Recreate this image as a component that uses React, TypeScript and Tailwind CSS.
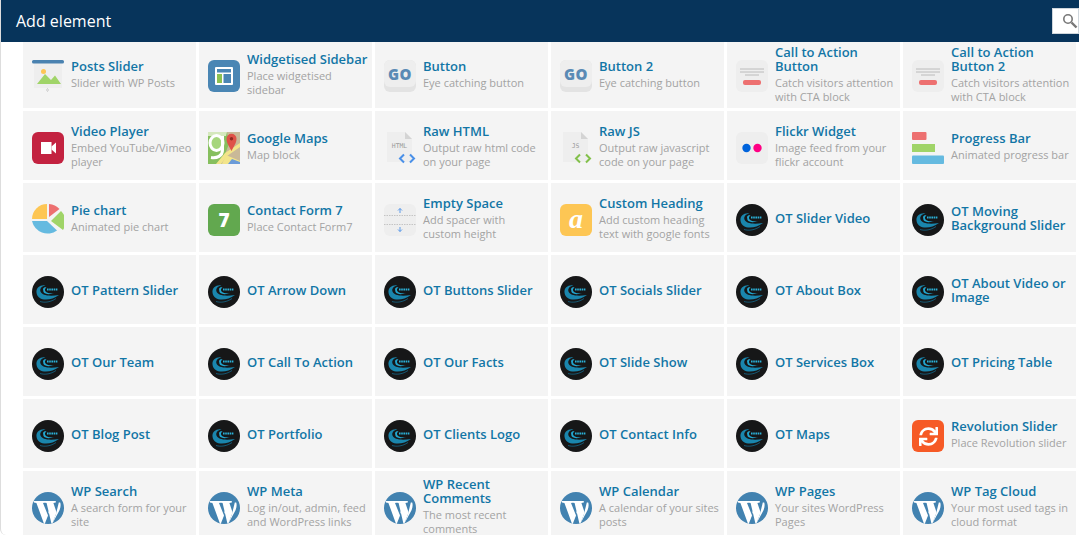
import { FaSync } from 'react-icons/fa'

type Item = { title: string; desc?: string; icon: string }

const items: Item[] = [
  { title: 'Posts Slider', desc: 'Slider with WP Posts', icon: 'slider' },
  { title: 'Widgetised Sidebar', desc: 'Place widgetised sidebar', icon: 'sidebar' },
  { title: 'Button', desc: 'Eye catching button', icon: 'go' },
  { title: 'Button 2', desc: 'Eye catching button', icon: 'go' },
  { title: 'Call to Action Button', desc: 'Catch visitors attention with CTA block', icon: 'cta' },
  { title: 'Call to Action Button 2', desc: 'Catch visitors attention with CTA block', icon: 'cta' },
  { title: 'Video Player', desc: 'Embed YouTube/Vimeo player', icon: 'video' },
  { title: 'Google Maps', desc: 'Map block', icon: 'maps' },
  { title: 'Raw HTML', desc: 'Output raw html code on your page', icon: 'html' },
  { title: 'Raw JS', desc: 'Output raw javascript code on your page', icon: 'js' },
  { title: 'Flickr Widget', desc: 'Image feed from your flickr account', icon: 'flickr' },
  { title: 'Progress Bar', desc: 'Animated progress bar', icon: 'progress' },
  { title: 'Pie chart', desc: 'Animated pie chart', icon: 'pie' },
  { title: 'Contact Form 7', desc: 'Place Contact Form7', icon: 'seven' },
  { title: 'Empty Space', desc: 'Add spacer with custom height', icon: 'space' },
  { title: 'Custom Heading', desc: 'Add custom heading text with google fonts', icon: 'heading' },
  { title: 'OT Slider Video', icon: 'ot' },
  { title: 'OT Moving Background Slider', icon: 'ot' },
  { title: 'OT Pattern Slider', icon: 'ot' },
  { title: 'OT Arrow Down', icon: 'ot' },
  { title: 'OT Buttons Slider', icon: 'ot' },
  { title: 'OT Socials Slider', icon: 'ot' },
  { title: 'OT About Box', icon: 'ot' },
  { title: 'OT About Video or Image', icon: 'ot' },
  { title: 'OT Our Team', icon: 'ot' },
  { title: 'OT Call To Action', icon: 'ot' },
  { title: 'OT Our Facts', icon: 'ot' },
  { title: 'OT Slide Show', icon: 'ot' },
  { title: 'OT Services Box', icon: 'ot' },
  { title: 'OT Pricing Table', icon: 'ot' },
  { title: 'OT Blog Post', icon: 'ot' },
  { title: 'OT Portfolio', icon: 'ot' },
  { title: 'OT Clients Logo', icon: 'ot' },
  { title: 'OT Contact Info', icon: 'ot' },
  { title: 'OT Maps', icon: 'ot' },
  { title: 'Revolution Slider', desc: 'Place Revolution slider', icon: 'rev' },
  { title: 'WP Search', desc: 'A search form for your site', icon: 'wp' },
  { title: 'WP Meta', desc: 'Log in/out, admin, feed and WordPress links', icon: 'wp' },
  { title: 'WP Recent Comments', desc: 'The most recent comments', icon: 'wp' },
  { title: 'WP Calendar', desc: 'A calendar of your sites posts', icon: 'wp' },
  { title: 'WP Pages', desc: 'Your sites WordPress Pages', icon: 'wp' },
  { title: 'WP Tag Cloud', desc: 'Your most used tags in cloud format', icon: 'wp' },
]

function Icon({ name }: { name: string }) {
  switch (name) {
    case 'slider':
      return (
        <svg viewBox="0 0 32 32" className="h-8 w-8">
          <rect x="2" y="2" width="28" height="26" fill="#eeeeee" />
          <rect x="0" y="0" width="32" height="3.5" rx="1.5" fill="#4a82b0" />
          <circle cx="11.5" cy="11.5" r="2.5" fill="#fdc654" />
          <path d="M5 24 L13 14 L19 20 L23 15.5 L29 24 Z" fill="#a0d468" />
          <path d="M15.5 28.5 L16.5 30 L15.5 31.5 L14.5 30 Z" fill="none" stroke="#aaaaaa" strokeWidth="0.5" />
        </svg>
      )
    case 'sidebar':
      return (
        <svg viewBox="0 0 32 32" className="h-8 w-8">
          <rect width="32" height="32" rx="6" fill="#4a86b4" />
          <rect x="7" y="7" width="18" height="18" rx="1" fill="#ffffff" />
          <rect x="9" y="9" width="14" height="3.5" fill="#4a86b4" />
          <rect x="9" y="14" width="5" height="9" fill="#8cc152" />
          <rect x="15.5" y="14" width="7.5" height="9" fill="#4a86b4" />
        </svg>
      )
    case 'go':
      return (
        <div className="relative h-8 w-8 rounded-md bg-[#e3e3e3]">
          <div className="flex h-[27px] w-8 items-center justify-center rounded-md bg-[#eeeeee] pt-[1px] font-['Open_Sans',sans-serif] text-[15px] leading-none font-extrabold tracking-[0.5px] text-[#5a8ab5]">
            GO
          </div>
        </div>
      )
    case 'cta':
      return (
        <svg viewBox="0 0 32 32" className="h-8 w-8">
          <rect width="32" height="32" rx="6" fill="#eeeeee" />
          <path d="M4 9 H28 M4 12 H28 M9 15 H23" stroke="#b4b4b4" strokeWidth="0.9" />
          <rect x="7" y="20" width="18" height="5" rx="2" fill="#ed7070" />
        </svg>
      )
    case 'video':
      return (
        <svg viewBox="0 0 32 32" className="h-8 w-8">
          <rect width="32" height="32" rx="6" fill="#c32240" />
          <rect x="9" y="10" width="10.5" height="12" fill="#ffffff" />
          <path d="M19.5 14.5 L24 10.5 V21.5 L19.5 17.5 Z" fill="#ffffff" />
        </svg>
      )
    case 'maps':
      return (
        <svg viewBox="0 0 32 32" className="h-8 w-8">
          <rect width="32" height="32" fill="#c9b998" />
          <path d="M0 0 H19 L21 12 L13 32 H0 Z" fill="#86bf5e" />
          <path d="M0 0 H19 L18 4 H0 Z" fill="#d5e8bd" />
          <path d="M8 32 L17 21 L32 11 V15 L19 24 L13 32 Z" fill="#f3e58a" />
          <path d="M18 23 L32 29 V32 H14 Z" fill="#f3e58a" />
          <path d="M20 32 L24 27 L32 30 V32 Z" fill="#6b9bd8" />
          <ellipse cx="8.5" cy="11" rx="6.5" ry="7.5" fill="#a6d67c" stroke="#ffffff" strokeWidth="3" />
          <path d="M14.5 4 V18 C14.5 24 9 26.5 3 25.5" fill="none" stroke="#ffffff" strokeWidth="3" />
          <path d="M23.5 19 C21 14 18.5 11 18.5 6.8 A5 5 0 0 1 28.5 6.8 C28.5 11 26 14 23.5 19 Z" fill="#df5248" />
          <circle cx="23.5" cy="6.8" r="1.7" fill="#8f2a22" />
        </svg>
      )
    case 'html':
    case 'js':
      return (
        <svg viewBox="0 0 32 32" className="h-8 w-8">
          <path d="M3 0 H21 L28 7 V30 H3 Z" fill="#eeeeee" />
          <path d="M21 0 L28 7 H21 Z" fill="#d4d4d4" />
          <text x="15.5" y="16" textAnchor="middle" fontFamily="'DejaVu Sans Mono', monospace" fontSize="6.4" fill="#9a9a9a">
            {name === 'html' ? 'HTML' : 'JS'}
          </text>
          <path
            d="M20 25 L16 29 L20 33 M26 25 L30 29 L26 33"
            transform="translate(0 -2.5)"
            fill="none"
            stroke={name === 'html' ? '#4a90e8' : '#82c04a'}
            strokeWidth="2"
          />
        </svg>
      )
    case 'flickr':
      return (
        <svg viewBox="0 0 32 32" className="h-8 w-8">
          <rect width="32" height="32" rx="6" fill="#eeeeee" />
          <circle cx="10.5" cy="16" r="4.2" fill="#0063dc" />
          <circle cx="21.5" cy="16" r="4.2" fill="#ff0084" />
        </svg>
      )
    case 'progress':
      return (
        <svg viewBox="0 0 32 32" className="h-8 w-8">
          <rect x="0" y="0" width="14.5" height="8" rx="1" fill="#ed7070" />
          <rect x="0" y="12" width="23" height="8" fill="#a0d468" />
          <rect x="0" y="23.5" width="32" height="8.5" rx="1" fill="#65bae0" />
        </svg>
      )
    case 'pie':
      return (
        <svg viewBox="0 0 32 32" className="h-8 w-8">
          <path d="M0 15 A15 15 0 0 1 15 0 V15 Z" fill="#fdc654" />
          <path d="M17 0 A15 15 0 0 1 27.5 5 L17 13 Z" fill="#ed7070" />
          <path d="M29 7 A15 15 0 0 1 31 26 L19 17 Z" fill="#a0d468" />
          <path d="M0 17 H15 L25 26.5 A16 16 0 0 1 0 17 Z" fill="#65bae0" />
        </svg>
      )
    case 'seven':
      return (
        <div className="flex h-8 w-8 items-center justify-center rounded-md bg-[#62a84f] font-['Open_Sans',sans-serif] text-[19px] leading-none font-extrabold text-white">
          7
        </div>
      )
    case 'space':
      return (
        <svg viewBox="0 0 32 32" className="h-8 w-8">
          <rect width="32" height="32" rx="6" fill="#eeeeee" />
          <path d="M0 11.5 H32 M0 20.5 H32" stroke="#a8a8a8" strokeWidth="0.6" strokeDasharray="1.5 1" />
          <path d="M16 9 V4.5 M14 6.5 L16 4.5 L18 6.5 M16 23 V27.5 M14 25.5 L16 27.5 L18 25.5" fill="none" stroke="#4a90e8" strokeWidth="0.9" />
        </svg>
      )
    case 'heading':
      return (
        <div className="flex h-8 w-8 items-center justify-center rounded-md bg-[#fdc654] pb-[3px] font-['Liberation_Serif',serif] text-[28px] leading-none font-bold text-white italic">
          a
        </div>
      )
    case 'ot':
      return (
        <svg viewBox="0 0 32 32" className="h-8 w-8">
          <circle cx="16" cy="16" r="16" fill="#161718" />
          <path d="M4.5 16.5 C4 11.5 8.5 8.5 13.5 9.5 C10 10 7.5 12.5 8.5 15.5 C10 19.5 17 20.5 27 19 C22 22.5 17 24 12 23.5 C7.5 23 5 20.5 4.5 16.5 Z" fill="#1a86ad" />
          <path d="M11 13 C11.5 11.5 13 11 14.5 11.5 C12.5 12.5 12.5 14.5 14 16 C16 17.5 19 17.5 22 17 C18 18.8 13 18.5 11.5 16 Z" fill="#22a6cf" />
          <path d="M15 13.5 H26" stroke="#2bb0d6" strokeWidth="2" strokeDasharray="1.6 0.6" />
          <path d="M8 25.5 C13 27 19 26 24 22.5" fill="none" stroke="#14688a" strokeWidth="0.8" />
        </svg>
      )
    case 'rev':
      return (
        <div className="flex h-8 w-8 items-center justify-center rounded-md bg-[#f65a26] text-[19px] text-white">
          <FaSync />
        </div>
      )
    default:
      return (
        <svg viewBox="0 0 32 32" className="h-8 w-8">
          <circle cx="16" cy="16" r="16" fill="#4282b0" />
          <path d="M1.6 9 H13.4 V10.6 L11 10.9 L16 23.5 L12.8 31.7 L12 31.7 L4.4 10.9 L1.9 10.6 Z" fill="#ffffff" />
          <path d="M13 31 L17.5 17 L18.6 19.5 L16.4 21 Z" fill="#ffffff" />
          <path d="M12.5 9 H23.8 V10.6 L21.4 10.9 L24.6 20.5 L20.4 31.6 L19.4 31.6 L14.6 10.9 L12.5 10.6 Z" fill="#ffffff" />
          <path d="M24 22 L26.8 10.5 L28.2 10.5 C29 13 28.6 15.5 27.4 18.5 L20.4 31.6 Z" fill="#ffffff" />
        </svg>
      )
  }
}

function Cell({ item }: { item: Item }) {
  return (
    <div className="flex h-[69px] items-center gap-[7px] bg-[#f4f4f4] pt-[5px] pr-[4px] pl-[9px]">
      <div className="h-8 w-8 shrink-0">
        <Icon name={item.icon} />
      </div>
      {item.desc ? (
        <div className="pb-[3px]">
          <div className="text-[13px] leading-[14px] font-semibold text-[#1276a6]">{item.title}</div>
          <div className="mt-[3px] text-[11px] leading-[14px] text-[#a3a3a3]">{item.desc}</div>
        </div>
      ) : (
        <div className="pb-[5px] text-[13px] leading-[14px] font-semibold text-[#1276a6]">{item.title}</div>
      )}
    </div>
  )
}

export default function App() {
  return (
    <div className="flex h-[535px] w-[1079px] flex-col overflow-hidden rounded-bl-md border-l border-l-[#dddddd] bg-white font-['Open_Sans',sans-serif]">
      <div className="flex h-[42px] shrink-0 items-center justify-between bg-[#07345b] pl-[15px]">
        <h1 className="text-[16px] text-white">Add element</h1>
        <div className="flex h-[26px] w-[27px] items-center justify-end border border-[#cfd6dc] bg-white">
          <svg viewBox="0 0 16 16" className="h-4 w-4">
            <circle cx="6" cy="6" r="4.2" fill="none" stroke="#777777" strokeWidth="1.6" />
            <path d="M9.5 9.5 L14.5 14.5" stroke="#777777" strokeWidth="2.4" />
          </svg>
        </div>
      </div>
      <div className="flex-1 overflow-hidden">
        <div className="-mt-[3px] ml-[22px] grid grid-cols-[repeat(6,173px)] gap-[3px]">
          {items.map((item, i) => (
            <Cell key={i} item={item} />
          ))}
        </div>
      </div>
    </div>
  )
}
